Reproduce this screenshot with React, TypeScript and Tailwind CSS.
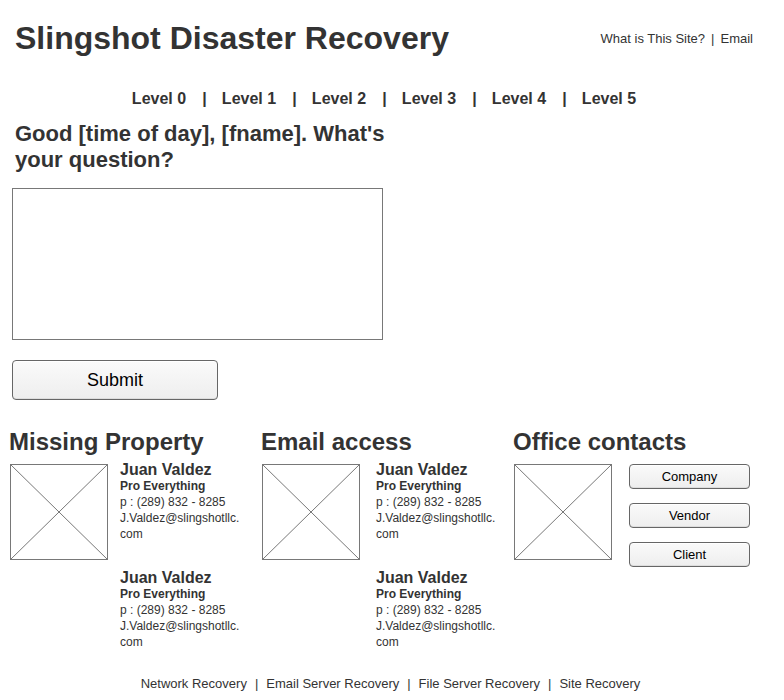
const levels = ["Level 0", "Level 1", "Level 2", "Level 3", "Level 4", "Level 5"];
const services = ["Network Recovery", "Email Server Recovery", "File Server Recovery", "Site Recovery"];
const offices = ["Company", "Vendor", "Client"];

const buttonSkin =
  "rounded-[4px] border border-[#666666] bg-linear-to-b from-[#fafafa] to-[#eeeeee] text-black shadow-[inset_0_1px_0_#ffffff,inset_0_-1px_0_#dddddd]";

function Placeholder() {
  return (
    <svg className="h-24 w-[98px] shrink-0" viewBox="0 0 98 96" fill="none" stroke="#787878" role="img" aria-label="Photo">
      <rect x="0.5" y="0.5" width="97" height="95" />
      <path d="M0.5 0.5L97.5 95.5M97.5 0.5L0.5 95.5" />
    </svg>
  );
}

function Contact() {
  return (
    <li className="text-xs leading-4">
      <h3 className="pb-[2px] text-base leading-3 font-bold">Juan Valdez</h3>
      <p className="font-bold">Pro Everything</p>
      <p>p : (289) 832 - 8285</p>
      <a href="#contact">
        J.Valdez@slingshotllc.
        <br />
        com
      </a>
    </li>
  );
}

function ContactColumn({ title, gap }: { title: string; gap: string }) {
  return (
    <section>
      <h2 className="-ml-px text-2xl leading-7 font-bold">{title}</h2>
      <div className={`mt-2 flex ${gap}`}>
        <Placeholder />
        <ul className="flex flex-col gap-[30px]">
          <Contact />
          <Contact />
        </ul>
      </div>
    </section>
  );
}

export default function App() {
  return (
    <div className="bg-white font-['Liberation_Sans',Arial,sans-serif] text-[#333333]">
      <header className="flex items-center justify-between pt-5 pr-[31px] pl-[15px]">
        <h1 className="text-[32px] leading-9 font-bold">Slingshot Disaster Recovery</h1>
        <nav aria-label="Help" className="flex gap-[6px] pt-[2px] text-[13px] leading-4">
          <a href="#about">What is This Site?</a>
          <span>|</span>
          <a href="#email">Email</a>
        </nav>
      </header>

      <nav aria-label="Levels" className="mt-[33px] pr-4">
        <ul className="flex justify-center text-base leading-5 font-bold">
          {levels.map((level, i) => (
            <li key={level} className={i < 5 ? "flex w-[90px] gap-4 whitespace-nowrap" : "whitespace-nowrap"}>
              <a href="#level">{level}</a>
              {i < 5 && <span>|</span>}
            </li>
          ))}
        </ul>
      </nav>

      <form className="mt-3 pl-3" onSubmit={(e) => e.preventDefault()}>
        <label htmlFor="question" className="block max-w-[400px] pl-[3px] text-[22px] leading-[26px] font-bold">
          Good [time of day], [fname]. What's your question?
        </label>
        <textarea id="question" className="mt-[15px] block h-[152px] w-[371px] resize-none border border-[#787878] p-2" />
        <button type="submit" className={`mt-5 h-10 w-[206px] text-lg ${buttonSkin}`}>
          Submit
        </button>
      </form>

      <main className="mt-7 grid grid-cols-3 pr-[18px] pl-[10px]">
        <ContactColumn title="Missing Property" gap="gap-3" />
        <ContactColumn title="Email access" gap="gap-4" />
        <section>
          <h2 className="-ml-px text-2xl leading-7 font-bold">Office contacts</h2>
          <div className="mt-2 flex gap-[17px]">
            <Placeholder />
            <div className="flex flex-col gap-[14px]">
              {offices.map((office) => (
                <button key={office} type="button" className={`h-[25px] w-[121px] text-[13px] ${buttonSkin}`}>
                  {office}
                </button>
              ))}
            </div>
          </div>
        </section>
      </main>

      <footer className="mt-[26px] flex justify-center gap-2 pr-[3px] text-[13px] leading-4">
        {services.map((service, i) => (
          <span key={service} className="flex gap-2">
            {i > 0 && <span>|</span>}
            <a href="#service">{service}</a>
          </span>
        ))}
      </footer>
    </div>
  );
}
